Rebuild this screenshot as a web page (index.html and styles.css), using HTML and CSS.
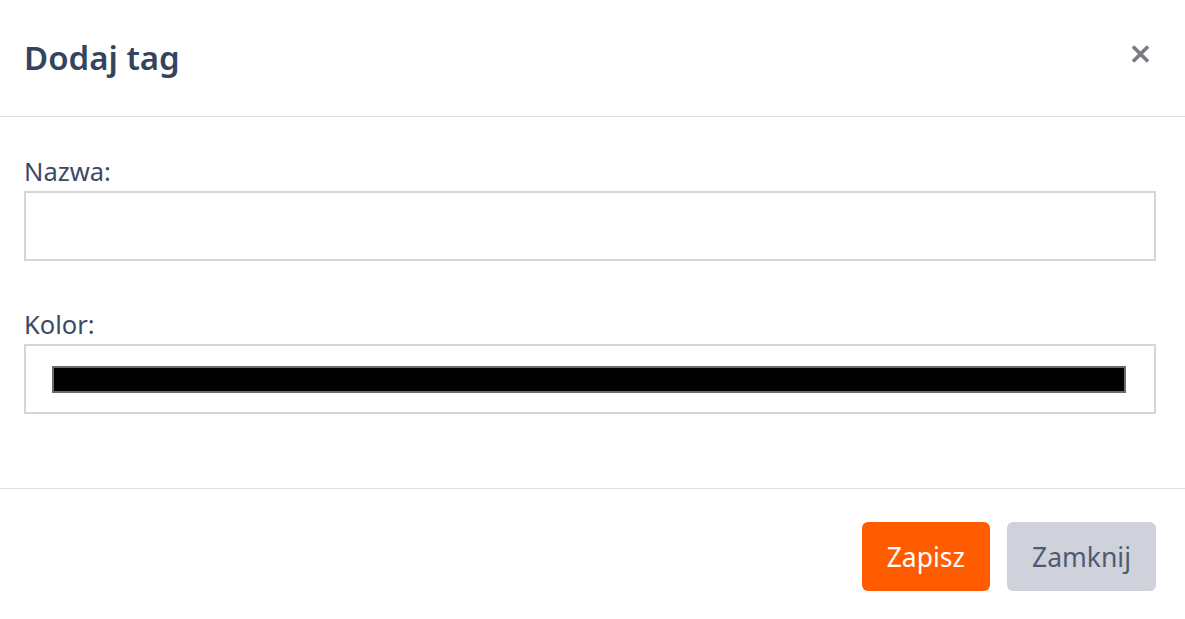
FILE: index.html
```html
<!DOCTYPE html>
<html lang="pl">
<head>
    <meta charset="UTF-8">
    <meta name="viewport" content="width=device-width, initial-scale=1.0">
    <title>Dodaj tag</title>
    <link rel="stylesheet" href="styles.css">
</head>
<body>

<div class="modal">
    <div class="modal-header">
        <h1 class="modal-title">Dodaj tag</h1>
        <button class="close-button" type="button" aria-label="Zamknij">
            <svg width="19" height="18" viewBox="0 0 19 18">
                <path d="M2 1.5 L17 16.5 M17 1.5 L2 16.5" stroke="#7b7b86" stroke-width="3.6" stroke-linecap="butt"/>
            </svg>
        </button>
    </div>

    <div class="modal-body">
        <div class="form-group">
            <label class="form-label" for="tagName">Nazwa:</label>
            <div class="form-input" id="tagName"></div>
        </div>
        <div class="form-group">
            <label class="form-label" for="tagColor">Kolor:</label>
            <div class="form-input color-input" id="tagColor">
                <span class="color-swatch"></span>
            </div>
        </div>
    </div>

    <div class="modal-footer">
        <button class="btn btn-save" type="button">Zapisz</button>
        <button class="btn btn-close" type="button">Zamknij</button>
    </div>
</div>

</body>
</html>
```

FILE: styles.css
```css
/* Estilos básicos */
body {
    font-family: "Noto Sans", "Open Sans", sans-serif;
    margin: 0;
    padding: 0;
    background-color: #fff;
    color: #34435e;
}

.modal {
    width: 1185px;
}

.modal-header {
    display: flex;
    align-items: center;
    justify-content: space-between;
    padding: 32px 35px 33px 24px;
    border-bottom: 1px solid #dcdfe4;
}

.modal-title {
    margin: 0;
    font-size: 33px;
    font-weight: 600;
    line-height: 51px;
    color: #34435e;
}

.close-button {
    background: none;
    border: none;
    padding: 0;
    width: 19px;
    height: 18px;
    margin-bottom: 7px;
    cursor: pointer;
    display: flex;
}

.modal-body {
    padding: 36px 29px 50px 24px;
}

.form-group {
    margin-bottom: 24px;
}

.form-group + .form-group {
    margin-top: 45px;
}

.form-label {
    display: block;
    font-size: 25.5px;
    line-height: 36px;
    margin-bottom: 2px;
    color: #3b4966;
}

.form-input {
    height: 66px;
    border: 2px solid #d6d6d6;
    background-color: #fff;
}

.color-input {
    box-sizing: border-box;
    height: 70px;
    padding: 20px 28px 0 26px;
}

.color-swatch {
    display: block;
    height: 23px;
    background-color: #000;
    border: 2px solid #6b6b6b;
}

.modal-footer {
    display: flex;
    justify-content: flex-end;
    gap: 17px;
    padding: 33px 29px 28px 24px;
    border-top: 1px solid #dcdfe4;
}

.btn {
    font-family: inherit;
    font-size: 26.5px;
    height: 69px;
    padding: 0 25px;
    border: none;
    border-radius: 6px;
    cursor: pointer;
}

.btn-save {
    background-color: #ff5c00;
    color: #fff;
}

.btn-close {
    background-color: #cfd2da;
    color: #4f5b73;
}
```
